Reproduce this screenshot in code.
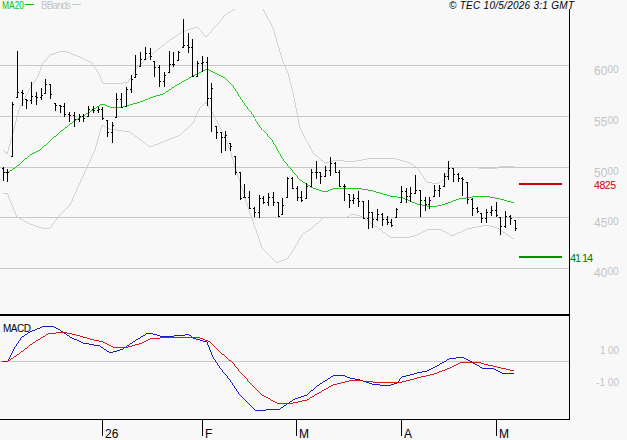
import React from 'react';

// hi, lo, close for every session; the open tick sits on the previous close
const bars: [number, number, number][] = [
  [167, 181, 172], [169, 182, 172], [102, 157, 104], [51, 98, 92], [90, 106, 93], [99, 109, 100], [82, 104, 96], [92, 105, 97],
  [88, 100, 95], [79, 94, 84], [84, 99, 94], [103, 111, 105], [105, 113, 106], [103, 117, 114], [112, 122, 115], [112, 127, 119],
  [114, 122, 116], [114, 122, 118], [106, 117, 109], [106, 113, 110], [107, 113, 109], [107, 120, 118], [120, 137, 132], [122, 143, 125],
  [93, 118, 99], [93, 108, 107], [87, 107, 89], [75, 93, 79], [55, 78, 74], [52, 67, 59], [47, 60, 53], [48, 60, 56],
  [61, 77, 67], [65, 87, 81], [72, 87, 75], [51, 73, 64], [52, 67, 64], [51, 61, 52], [19, 48, 45], [33, 53, 47],
  [39, 77, 76], [61, 77, 63], [56, 72, 62], [57, 106, 98], [83, 132, 88], [126, 139, 132], [132, 153, 137], [131, 151, 135],
  [143, 151, 146], [156, 175, 172], [172, 200, 198], [184, 198, 197], [191, 209, 208], [207, 217, 212], [195, 218, 198], [196, 204, 202],
  [193, 206, 197], [192, 206, 202], [202, 217, 216], [198, 215, 205], [177, 198, 178], [177, 189, 188], [186, 201, 197], [191, 202, 200],
  [183, 199, 186], [169, 187, 172], [161, 179, 172], [172, 184, 176], [166, 177, 170], [157, 176, 163], [162, 173, 172], [170, 187, 186],
  [184, 201, 186], [194, 208, 200], [194, 204, 198], [191, 207, 201], [201, 219, 218], [200, 229, 212], [212, 228, 219], [209, 221, 214],
  [213, 226, 219], [216, 225, 222], [219, 227, 225], [208, 218, 209], [186, 203, 191], [188, 203, 196], [187, 202, 193], [175, 194, 190],
  [190, 217, 200], [197, 211, 204], [197, 209, 200], [185, 197, 190], [185, 197, 188], [173, 187, 176], [161, 180, 168], [168, 182, 174],
  [173, 182, 178], [177, 196, 179], [182, 204, 199], [198, 216, 208], [207, 213, 211], [213, 223, 218], [209, 223, 212], [206, 216, 210],
  [202, 217, 215], [217, 235, 226], [211, 228, 216], [215, 225, 218], [220, 231, 228],
];

const ma20 = '3,172 7,173 15,168 22,162 30,155 40,150 60,132 73,122 88,113 102,104 110,107 123,107 140,102 153,97 163,94 177,85 193,76 207,69 215,73 225,78 233,86 243,102 253,115 263,130 272,140 282,158 290,168 300,180 313,188 325,192 333,189 357,188 373,191 390,196 403,198 410,201 417,204 432,207 442,205 459,199 472,197 485,196 500,199 514,203';
const upper1 = '3,150 7,154 12,137 17,117 20,107 30,88 37,78 43,63 50,55 62,51 67,52 80,57 92,63 98,72 103,83 117,84 128,82 137,67 143,62 157,50 170,40 182,32 197,27 200,30 206,37 217,25 225,15 235,9';
const upper2 = '263,9 273,28 283,62 288,73 293,93 297,113 300,128 313,153 325,163 337,160 350,162 373,158 393,158 410,163 417,168 427,182 437,184 444,180 449,168 460,167 479,168 495,169 499,167 514,166';
const lower = '3,193 7,193 17,217 30,224 42,228 50,228 58,217 70,205 87,167 95,150 102,125 110,129 130,132 150,147 160,143 180,135 193,123 200,108 206,102 212,112 220,127 225,137 231,153 235,167 242,188 250,213 262,248 268,254 277,263 288,258 295,247 302,235 312,228 323,218 347,217 352,214 360,216 370,222 390,237 410,237 417,235 429,229 440,229 452,236 467,229 487,225 497,228 514,239';
const macdBlue = '2,361 8,361 15,347 22,337 30,332 42,327 52,326 58,329 70,337 83,343 100,346 110,353 123,349 133,342 148,333 157,335 163,337 185,335 188,334 193,338 203,341 207,342 213,357 220,368 230,380 240,395 255,410 263,411 268,409 278,410 295,399 307,395 317,386 333,376 342,375 350,378 360,380 372,384 388,386 397,383 402,377 410,375 417,373 427,371 437,366 449,359 462,357 470,361 482,368 492,368 502,373 514,374';
const macdRed = '2,361 8,361 20,353 33,343 48,334 63,332 80,336 90,339 103,342 113,347 128,347 142,343 150,339 160,338 187,337 200,338 210,342 220,352 233,363 240,372 255,388 262,395 277,403 288,404 307,400 317,394 333,385 353,380 373,382 398,383 410,380 417,378 434,374 450,368 462,362 477,362 484,364 497,367 514,371';

const gridLines = [65, 116, 167, 217, 268];
const scale = [
  { big: '60', small: '00', y: 75 },
  { big: '55', small: '00', y: 126 },
  { big: '50', small: '00', y: 177 },
  { big: '45', small: '00', y: 227 },
  { big: '40', small: '00', y: 277 },
];
const months = [
  { x: 102, label: '26' },
  { x: 202, label: 'F' },
  { x: 296, label: 'M' },
  { x: 401, label: 'A' },
  { x: 496, label: 'M' },
];

const App = () => {
  return (
    <div className="w-[627px] h-[440px] bg-[#f8f8f8] font-['Liberation_Sans',Arial,sans-serif]">
      <svg className="block w-full h-full" viewBox="0 0 627 440" width={627} height={440}>
        {/* --- Legend --- */}
        <text x={2} y={9} fontSize={10} textLength={22} lengthAdjust="spacingAndGlyphs" className="fill-[#00c800]">MA20</text>
        <rect x={25} y={4} width={9} height={1} className="fill-[#00c800]" />
        <text x={41} y={9} fontSize={10} textLength={30} className="fill-[#c4c4c4]">BBands</text>
        <rect x={72} y={4} width={9} height={1} className="fill-[#cccccc]" />
        <text x={449} y={9} fontSize={10} fontStyle="italic" textLength={125} className="fill-black">© TEC 10/5/2026 3:1 GMT</text>

        {/* --- Grid --- */}
        {gridLines.map((y) => (
          <rect key={y} x={0} y={y} width={569} height={1} className="fill-[#c8c8c8]" />
        ))}
        <rect x={0} y={361} width={569} height={1} className="fill-[#c8c8c8]" />

        {/* --- Bollinger bands and moving average --- */}
        <g fill="none" shapeRendering="crispEdges" strokeWidth={0.9}>
          <polyline points={upper1} className="stroke-[#cccccc]" />
          <polyline points={upper2} className="stroke-[#cccccc]" />
          <polyline points={lower} className="stroke-[#cccccc]" />
          <polyline points={ma20} className="stroke-[#00c800]" />
        </g>

        {/* --- Price bars --- */}
        <g shapeRendering="crispEdges" className="fill-black">
          {bars.map(([hi, lo, close], i) => {
            const x = Math.round(2.7 + i * 4.74);
            const prev = i > 0 ? bars[i - 1][2] : hi + 1;
            const open = Math.min(lo - 1, Math.max(hi, prev));
            return (
              <g key={i}>
                <rect x={x} y={hi} width={1} height={lo - hi} />
                <rect x={x - 1} y={open} width={1} height={1} />
                <rect x={x + 1} y={close} width={1} height={1} />
              </g>
            );
          })}
        </g>

        {/* --- Target levels --- */}
        <rect x={519} y={183} width={43} height={2} className="fill-[#c80000]" />
        <rect x={519} y={256} width={43} height={2} className="fill-[#009000]" />

        {/* --- MACD --- */}
        <text x={3} y={332} fontSize={10} textLength={28} className="fill-black">MACD</text>
        <g fill="none" shapeRendering="crispEdges" strokeWidth={0.9}>
          <polyline points={macdBlue} className="stroke-[#0000d0]" />
          <polyline points={macdRed} className="stroke-[#d00000]" />
        </g>

        {/* --- Frame --- */}
        <rect x={0} y={314} width={569} height={2} className="fill-black" />
        <rect x={0} y={419} width={570} height={1} className="fill-black" />
        <rect x={569} y={9} width={1} height={411} className="fill-black" />

        {/* --- Month ticks --- */}
        {months.map((m) => (
          <g key={m.x}>
            <rect x={m.x} y={419} width={1} height={17} className="fill-black" />
            <text x={m.x + 3} y={438} fontSize={12} className="fill-black">{m.label}</text>
          </g>
        ))}

        {/* --- Price scale --- */}
        {scale.map((s) => (
          <text key={s.big} x={594} y={s.y} fontSize={12} className="fill-[#c4c4c4]">
            {s.big}
            <tspan x={607.5} dy={-2} fontSize={10}>{s.small}</tspan>
          </text>
        ))}
        <text x={594} y={189} fontSize={10.5} textLength={22} className="fill-[#c80000]">4825</text>
        <text x={570} y={262} fontSize={11} textLength={23} className="fill-[#008000]">41 14</text>
        <text x={600} y={354} fontSize={10} textLength={19} className="fill-[#c4c4c4]">1 00</text>
        <text x={596} y={386} fontSize={10} textLength={23} className="fill-[#c4c4c4]">-1 00</text>
      </svg>
    </div>
  );
};

export default App;
